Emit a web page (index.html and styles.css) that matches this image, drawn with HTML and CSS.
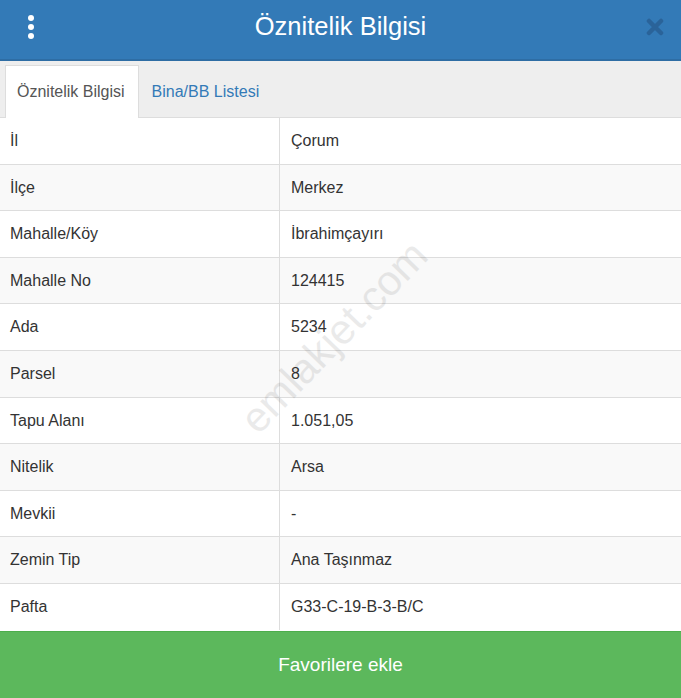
FILE: index.html
```html
<!DOCTYPE html>
<html lang="tr">
  <head>
    <meta charset="UTF-8">
    <meta name="viewport" content="width=device-width, initial-scale=1">
    <title>Öznitelik Bilgisi</title>
    <link rel="stylesheet" href="styles.css">
  </head>
  <body>
    <div class="panel">
      <header class="panel-head">
        <button class="btn-menu" aria-label="Menü">
          <svg width="8" height="26" viewBox="0 0 8 26">
            <circle cx="4" cy="4" r="3"/>
            <circle cx="4" cy="13" r="3"/>
            <circle cx="4" cy="22" r="3"/>
          </svg>
        </button>
        <h1 class="panel-title">Öznitelik Bilgisi</h1>
        <button class="btn-close" aria-label="Kapat">
          <svg width="18" height="18" viewBox="0 0 18 18">
            <path d="M3 3 L15 15 M15 3 L3 15"/>
          </svg>
        </button>
      </header>

      <ul class="tabs">
        <li class="tab active"><a href="#">Öznitelik Bilgisi</a></li>
        <li class="tab"><a href="#">Bina/BB Listesi</a></li>
      </ul>

      <div class="table-wrap">
        <table class="attr-table">
          <tr><td>İl</td><td>Çorum</td></tr>
          <tr><td>İlçe</td><td>Merkez</td></tr>
          <tr><td>Mahalle/Köy</td><td>İbrahimçayırı</td></tr>
          <tr><td>Mahalle No</td><td>124415</td></tr>
          <tr><td>Ada</td><td>5234</td></tr>
          <tr><td>Parsel</td><td>8</td></tr>
          <tr><td>Tapu Alanı</td><td>1.051,05</td></tr>
          <tr><td>Nitelik</td><td>Arsa</td></tr>
          <tr><td>Mevkii</td><td>-</td></tr>
          <tr><td>Zemin Tip</td><td>Ana Taşınmaz</td></tr>
          <tr><td>Pafta</td><td>G33-C-19-B-3-B/C</td></tr>
        </table>
        <span class="watermark">emlakjet.com</span>
      </div>

      <button class="btn-fav">Favorilere ekle</button>
    </div>
  </body>
</html>
```
FILE: styles.css
```css
body {
  margin: 0;
  padding: 0;
  background: #fff;
  font-family: "Liberation Sans", Arial, Helvetica, sans-serif;
  font-size: 16px;
  color: #333;
}
.panel {
  width: 681px;
  height: 698px;
  display: flex;
  flex-direction: column;
  overflow: hidden;
}
.panel-head {
  flex-shrink: 0;
  box-sizing: border-box;
  height: 61px;
  background: #337ab7;
  border-bottom: 2px solid #2e6da4;
  display: flex;
  align-items: center;
  justify-content: space-between;
  padding: 0 17px 6px 27px;
}
.panel-title {
  margin: 0;
  color: #fff;
  font-size: 25.5px;
  font-weight: normal;
  line-height: 1;
}
.btn-menu,
.btn-close {
  border: none;
  background: none;
  padding: 0;
  cursor: pointer;
  display: flex;
}
.btn-menu svg {
  fill: #fff;
}
.btn-close svg {
  stroke: #2a6399;
  stroke-width: 4.5;
  stroke-linecap: round;
}
.tabs {
  flex-shrink: 0;
  list-style: none;
  margin: 0;
  padding: 4px 5px 0;
  height: 52px;
  background: #eee;
  border-bottom: 1px solid #ddd;
  display: flex;
  gap: 1px;
}
.tab a {
  display: block;
  padding: 0 13px 0 11px;
  line-height: 51px;
  font-size: 16px;
  color: #337ab7;
  text-decoration: none;
  border: 1px solid transparent;
  border-bottom: none;
}
.tab.active a {
  color: #555;
  background: #fff;
  border-color: #ddd;
  margin-bottom: -1px;
  line-height: 52px;
}
.table-wrap {
  position: relative;
  flex: 1;
}
.attr-table {
  width: 100%;
  border-collapse: collapse;
}
.attr-table td {
  padding: 12px 10px;
  line-height: 21.6px;
  border-top: 1px solid #ddd;
}
.attr-table tr:first-child td {
  border-top: none;
}
.attr-table td:first-child {
  width: 259px;
  border-right: 1px solid #ddd;
}
.attr-table td:last-child {
  padding-left: 11px;
}
.attr-table tr:nth-child(even) td {
  background: #f9f9f9;
}
/* diagonal site mark over the table */
.watermark {
  position: absolute;
  left: 334px;
  top: 219px;
  transform: translate(-50%, -50%) rotate(-46deg);
  font-size: 42px;
  color: #000;
  opacity: 0.08;
  white-space: nowrap;
  pointer-events: none;
}
.btn-fav {
  flex-shrink: 0;
  height: 67px;
  border: none;
  border-top: 1px solid #4cae4c;
  background: #5cb85c;
  color: #fff;
  font-family: inherit;
  font-size: 19px;
  cursor: pointer;
}
```
